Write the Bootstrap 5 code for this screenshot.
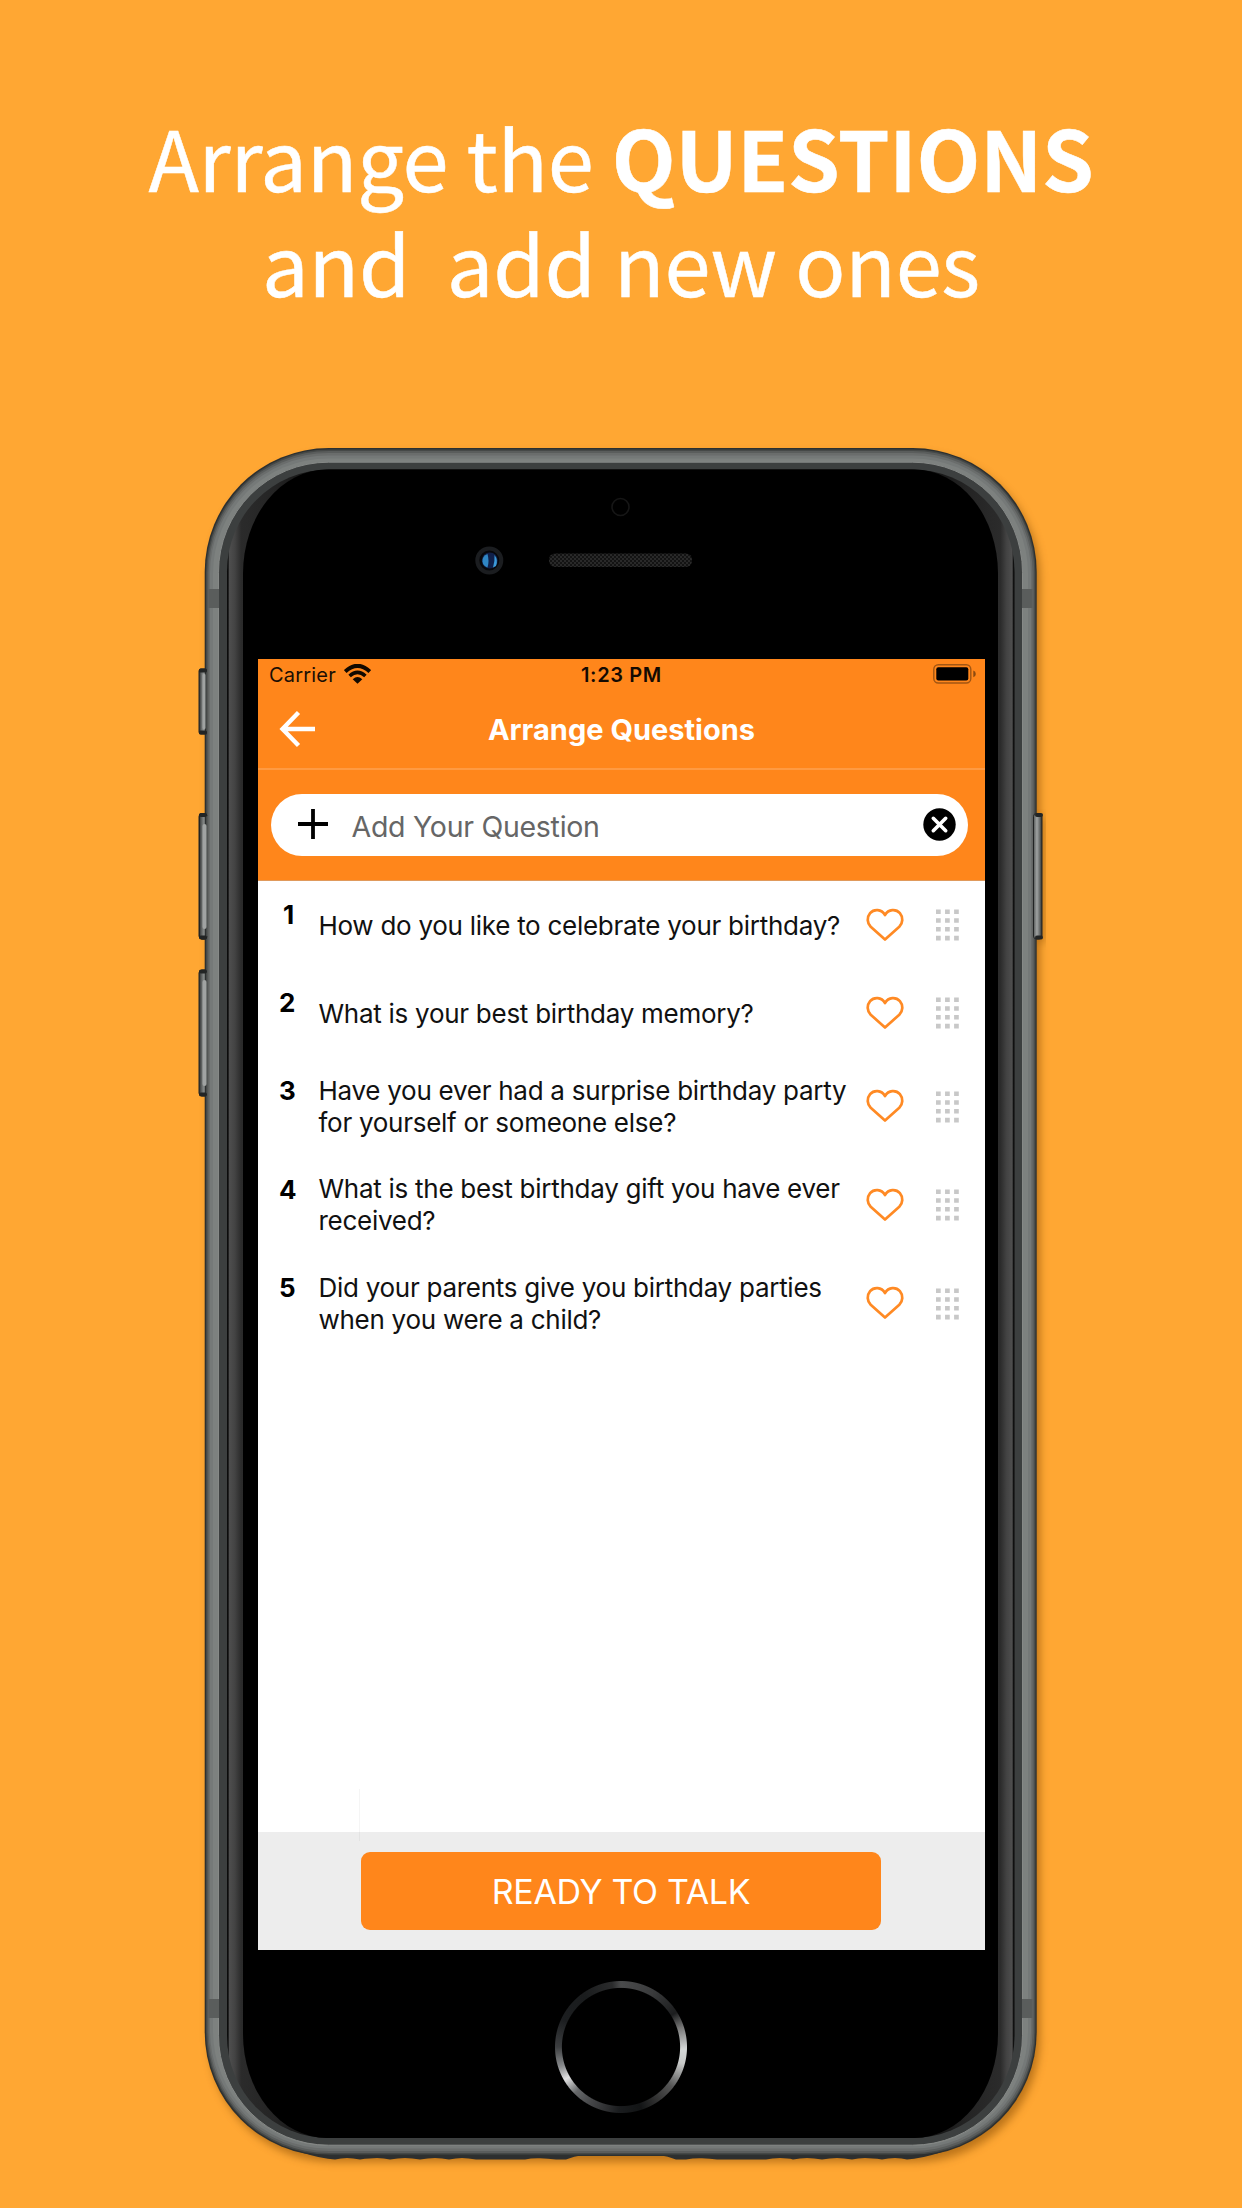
<!DOCTYPE html>
<html lang="en">
<head>
<meta charset="utf-8">
<meta name="viewport" content="width=device-width, initial-scale=1">
<title>Arrange Questions</title>
<link rel="stylesheet" href="https://cdn.jsdelivr.net/npm/bootstrap@5.3.0/dist/css/bootstrap.min.css">
<style>
  html, body { background: #ffa733; }
  body { width: 1242px; height: 2208px; overflow: hidden; font-family: Inter, "Liberation Sans", sans-serif; }
  .promo { height: 448px; padding-top: 104px; font-family: "Noto Sans CJK SC", "Noto Sans", sans-serif; font-size: 83px; letter-spacing: -.25px; line-height: 105px; white-space: pre; font-weight: 400; -webkit-text-stroke: .5px #fff; }
  .promo b { font-weight: 700; }
  .phone { width: 832px; height: 1712px; margin-left: 205px; padding: 210.5px 52px 0 53px; }
  .shell { left: -205px; top: -448px; width: 1242px; height: 2208px; pointer-events: none; }
  .home-ring { left: 348.5px; top: 1531.5px; width: 134px; height: 134px;
    background: conic-gradient(#4a4b4c 0deg, #3a3b3c 30deg, #1c1d1e 58deg, #777 72deg, #d5d8d7 92deg, #c8cac9 105deg, #555 128deg, #333 145deg, #121415 162deg, #1a1c1e 182deg, #2c2d2f 192deg, #48494b 210deg, #66686a 225deg, #e2e2e3 240deg, #8a8c8e 252deg, #3c3e40 270deg, #1c1e20 295deg, #1a1c1d 325deg, #2a2b2c 352deg, #4a4b4c 360deg);
    -webkit-mask: radial-gradient(circle, transparent 58.6px, #000 59.6px, #000 65.5px, transparent 66.5px);
    mask: radial-gradient(circle, transparent 58.6px, #000 59.6px, #000 65.5px, transparent 66.5px); }
  .app { width: 727px; height: 1291px; background: #fff; color: #111; }
  .app-head { background: #ff861b; height: 222px; border-bottom: 1px solid #e09a5c; }
  .status { height: 31px; padding: 0 9px 0 11px; font-size: 20px; line-height: 31px; color: #1a0e04; }
  .status .carrier { letter-spacing: .2px; padding-top: 2px; }
  .status-time { font-weight: 600; color: #140a02; letter-spacing: .65px; padding-top: 2px; }
  .title-bar { height: 80px; border-bottom: 2px solid #ff9a42; }
  .title-bar .back { margin-left: 20px; width: 40px; margin-top: 1px; }
  .title-text { font-size: 29px; font-weight: 700; line-height: 80px; padding-top: 2px; }
  .ask { margin: 24px 17.5px 0 12.5px; height: 62px; border-radius: 31px; padding: 0 12px 0 26.5px; }
  .ask svg { margin-bottom: 1px; }
  .ask-text { font-size: 28.5px; letter-spacing: -.28px; color: #666; line-height: 62px; margin-left: 22.5px; padding-top: 5px; }
  .q-row { padding: 0 26px 0 21px; border: 0; }
  .q-short { height: 88px; }
  .q-long { height: 98.6px; }
  .q-num { width: 39.5px; font-size: 26px; font-weight: 700; line-height: 32px; padding-top: 18.5px; color: #000; }
  .q-text { font-size: 26px; letter-spacing: -.27px; line-height: 32px; width: 548px; white-space: nowrap; padding-top: 2px; }
  .q-heart { width: 38px; height: 34px; margin-right: 32px; margin-top: 1px; }
  .q-grip { width: 23px; height: 32px; margin-top: 1.5px; }
  .foot { height: 118px; background: #ededed; padding-top: 20.5px; padding-right: 1px; }
  .foot .btn-ready { width: 520px; height: 78px; border-radius: 9px; background: #ff861b; color: #fff; font-size: 34px; letter-spacing: -.35px; line-height: 76px; padding: 2px 0 0; border: 0; }
  .hairline { left: 101px; top: 1130px; width: 1px; height: 52px; background: rgba(0,0,0,.04); }
</style>
</head>
<body>
<h1 class="promo text-white text-center m-0">Arrange the <b>QUESTIONS</b>
and  add new ones</h1>

<main class="phone position-relative">
  <svg class="shell position-absolute" viewBox="0 0 1242 2208" aria-hidden="true">
    <defs>
      <linearGradient id="glassL" gradientUnits="userSpaceOnUse" x1="227" y1="0" x2="1014.5" y2="0">
        <stop offset="0" stop-color="#080808"/><stop offset=".0015" stop-color="#111"/><stop offset=".003" stop-color="#4e4e4e"/>
        <stop offset=".01" stop-color="#434343"/><stop offset=".018" stop-color="#2b2b2b"/><stop offset=".06" stop-color="#242424"/>
        <stop offset=".13" stop-color="#0c0c0c"/><stop offset=".87" stop-color="#0c0c0c"/>
        <stop offset=".94" stop-color="#242424"/><stop offset=".982" stop-color="#2b2b2b"/><stop offset=".99" stop-color="#434343"/>
        <stop offset=".997" stop-color="#4e4e4e"/><stop offset=".9985" stop-color="#111"/><stop offset="1" stop-color="#080808"/>
      </linearGradient>
      <linearGradient id="key" x1="0" x2="1" y1="0" y2="0"><stop offset="0" stop-color="#2b2d2d"/><stop offset=".3" stop-color="#6d706f"/><stop offset=".6" stop-color="#a0a3a2"/><stop offset="1" stop-color="#555857"/></linearGradient>
      <linearGradient id="keyR" x1="1" x2="0" y1="0" y2="0"><stop offset="0" stop-color="#2b2d2d"/><stop offset=".3" stop-color="#6d706f"/><stop offset=".6" stop-color="#a0a3a2"/><stop offset="1" stop-color="#555857"/></linearGradient>
      <pattern id="mesh" width="4" height="4" patternUnits="userSpaceOnUse"><rect width="4" height="4" fill="#131313"/><rect width="2" height="2" fill="#292929"/><rect x="2" y="2" width="2" height="2" fill="#292929"/></pattern>
      <filter id="soft" x="-5%" y="-5%" width="110%" height="110%"><feGaussianBlur stdDeviation="4"/></filter>
    </defs>
    <rect x="209" y="454" width="831" height="1708" rx="124" fill="#7a4300" opacity=".5" filter="url(#soft)"/>
    <rect x="1037" y="816" width="8" height="127" rx="3" fill="#7a4300" opacity=".4" filter="url(#soft)"/>
    <!-- side keys; the right one overlaps the frame edge -->
    <g stroke="#222424" stroke-width="1">
      <rect x="199" y="669" width="9" height="65" rx="2" fill="url(#key)"/>
      <rect x="199" y="813.5" width="11" height="125.5" rx="3" fill="url(#key)"/>
      <rect x="199" y="970" width="11" height="126" rx="3" fill="url(#key)"/>
    </g>
    <!-- metal frame, dark edge to bright ridge -->
    <path fill="#2d2f2f" d="M300 2152Q322 2159 335 2159.500Q341 2158 347 2158T360 2159.500Q370 2158 377 2158T390 2159.500Q398 2158 405 2158T420 2159.500Q428 2158 435 2158T449 2159.500Q456 2158 462 2158T476 2159.500H525Q532 2158 540 2158.300T556 2159.500H566Q574 2156 583 2155H659Q668 2156 676 2159.500H686Q694 2158 702 2158.300T717 2159.500H766Q772 2158 780 2158T793 2159.500Q800 2158 807 2158T822 2159.500Q830 2158 837 2158T852 2159.500Q858 2158 865 2158T882 2159.500Q888 2158 895 2158T907 2159.500Q920 2159 942 2152Z"/>
    <rect x="204.700" y="448" width="832" height="1708" rx="124" fill="#2d3030"/>
    <rect x="206" y="449.500" width="829.500" height="1705" rx="123" fill="#454847"/>
    <rect x="207.300" y="451" width="827" height="1702" rx="121.500" fill="#5a5d5c"/>
    <rect x="208.600" y="453" width="824" height="1698" rx="120" fill="#6a6d6c"/>
    <rect x="210" y="455.500" width="821" height="1693" rx="118" fill="#757978"/>
    <rect x="213" y="458.500" width="815" height="1687.500" rx="115" fill="#7d817f"/>
    <rect x="218.500" y="462.200" width="804" height="1683" rx="110" fill="#3c3f3f" stroke="#868987" stroke-width="1"/>
    <g fill="#5a5d5c">
      <rect x="208.500" y="589" width="10.500" height="19"/><rect x="1022" y="589" width="10.500" height="19"/>
      <rect x="208.500" y="1999" width="10.500" height="19"/><rect x="1022" y="1999" width="10.500" height="19"/>
    </g>
    <g stroke="#222424" stroke-width="1">
      <path d="M207 816Q207 813.500 204 813.500H202Q199.500 813.500 199.500 816V936.500Q199.500 939 202 939H204Q207 939 207 936.500" fill="none"/>
      <rect x="1033.500" y="813.500" width="8.500" height="125.500" rx="3" fill="url(#keyR)"/>
    </g>
    <g fill="#a0a3a2">
      <rect x="202.500" y="824" width="4" height="105" rx="2"/><rect x="202.500" y="980" width="4" height="106" rx="2"/><rect x="202.500" y="674" width="3" height="55" rx="1"/>
    </g>
    <g fill="#222424">
      <rect x="199" y="668.500" width="8" height="4" rx="1.500"/><rect x="199" y="730.500" width="8" height="4" rx="1.500"/>
      <rect x="199" y="813" width="8" height="4" rx="2"/><rect x="199" y="935.500" width="8" height="4" rx="2"/>
      <rect x="199" y="969.500" width="8" height="4" rx="2"/><rect x="199" y="1092.500" width="8" height="4" rx="2"/>
      <rect x="1035" y="813" width="8" height="4" rx="2"/><rect x="1035" y="935.500" width="8" height="4" rx="2"/>
    </g>
    <rect x="227" y="469.500" width="787.500" height="1668.500" rx="102" fill="url(#glassL)"/>
    <rect x="243" y="469.500" width="755" height="1668.500" rx="84" ry="104" fill="#000"/>
    <!-- sensor, camera, earpiece -->
    <circle cx="620.500" cy="507" r="8.500" fill="#000" stroke="#161616" stroke-width="1.600"/>
    <circle cx="489.300" cy="560.500" r="12" fill="#08080a" stroke="#1b1d20" stroke-width="4"/>
    <circle cx="489.800" cy="560.500" r="8" fill="#10204a"/>
    <path d="M487.500 554Q482 556 482.500 561.500Q483 566 487.500 567.500Q489.500 561 487.500 554Z" fill="#2f86c4"/>
    <path d="M494.500 555Q498.500 560 496 566L493 567.500Q495 561 494.500 555Z" fill="#3b9ad8"/>
    <rect x="549" y="553.500" width="143" height="13.500" rx="6" fill="url(#mesh)"/>
  </svg>
  <div class="home-ring position-absolute rounded-circle"></div>

  <div class="app position-relative d-flex flex-column">
    <header class="app-head text-white flex-shrink-0">
      <div class="status d-flex justify-content-between align-items-center position-relative">
        <div class="d-flex align-items-center gap-2">
          <span class="carrier">Carrier</span>
          <svg width="27" height="20" viewBox="0 0 27 20" fill="none" stroke="#120900"><path d="M1.200 7.500Q13.500-3.800 25.800 7.500" stroke-width="4"/><path d="M5.600 12Q13.500 4.800 21.400 12" stroke-width="3.600"/><path d="M13.500 19.800L8.700 15.200Q13.500 11 18.300 15.200Z" fill="#120900" stroke="none"/></svg>
        </div>
        <span class="status-time position-absolute start-50 translate-middle-x text-nowrap">1:23 PM</span>
        <svg width="43" height="20" viewBox="0 0 43 20"><rect x=".8" y=".8" width="37" height="18.200" rx="4.500" fill="none" stroke="#a25613" stroke-width="1.400"/><rect x="3.300" y="3.300" width="32" height="13.200" rx="2" fill="#000"/><path d="M40.300 6.500Q42.800 7.500 42.800 9.900T40.300 13.300Z" fill="#8c4a10"/></svg>
      </div>
      <div class="title-bar d-flex align-items-center position-relative">
        <svg class="back" height="40" viewBox="0 0 40 40" fill="none" stroke="#fff" stroke-width="4.400"><path d="M37 20H5M20.500 3.500L4.500 20L20.500 36.500"/></svg>
        <span class="title-text position-absolute start-50 translate-middle-x text-nowrap">Arrange Questions</span>
      </div>
      <div class="ask bg-white d-flex align-items-center">
        <svg width="32" height="32" viewBox="0 0 32 32" stroke="#000" stroke-width="3.800"><path d="M16 1V31M1 16H31"/></svg>
        <span class="ask-text me-auto">Add Your Question</span>
        <svg width="33" height="33" viewBox="0 0 33 33"><circle cx="16.500" cy="16.500" r="16.200" fill="#000"/><path d="M10.300 10.300L22.700 22.700M22.700 10.300L10.300 22.700" stroke="#fff" stroke-width="3.600" stroke-linecap="round"/></svg>
      </div>
    </header>

    <svg class="d-none">
      <symbol id="heart" viewBox="0 0 38 34"><path d="M19 7C15.500 1 8 .8 4.100 5.200C.7 9.300 1 15 4.700 18.700L19 31.500L33.300 18.700C37 15 37.300 9.300 33.900 5.200C30 .8 22.500 1 19 7Z" fill="none" stroke="#ff8a24" stroke-width="2.700" stroke-linejoin="round"/></symbol>
      <symbol id="grip" viewBox="0 0 23 32"><path d="M0 2.700H23M0 11.500H23M0 20.300H23M0 29.100H23" stroke="#c8c8c8" stroke-width="4.600" stroke-dasharray="4.700 4.350"/></symbol>
    </svg>
    <div class="list-group list-group-flush flex-grow-1">
      <div class="q-row q-short d-flex align-items-center">
        <div class="q-num align-self-start ps-1">1</div>
        <div class="q-text flex-grow-1">How do you like to celebrate your birthday?</div>
        <svg class="q-heart flex-shrink-0"><use href="#heart"/></svg><svg class="q-grip flex-shrink-0"><use href="#grip"/></svg>
      </div>
      <div class="q-row q-short d-flex align-items-center">
        <div class="q-num align-self-start">2</div>
        <div class="q-text flex-grow-1">What is your best birthday memory?</div>
        <svg class="q-heart flex-shrink-0"><use href="#heart"/></svg><svg class="q-grip flex-shrink-0"><use href="#grip"/></svg>
      </div>
      <div class="q-row q-long d-flex align-items-center">
        <div class="q-num align-self-start">3</div>
        <div class="q-text flex-grow-1">Have you ever had a surprise birthday party<br>for yourself or someone else?</div>
        <svg class="q-heart flex-shrink-0"><use href="#heart"/></svg><svg class="q-grip flex-shrink-0"><use href="#grip"/></svg>
      </div>
      <div class="q-row q-long d-flex align-items-center">
        <div class="q-num align-self-start">4</div>
        <div class="q-text flex-grow-1">What is the best birthday gift you have ever<br>received?</div>
        <svg class="q-heart flex-shrink-0"><use href="#heart"/></svg><svg class="q-grip flex-shrink-0"><use href="#grip"/></svg>
      </div>
      <div class="q-row q-long d-flex align-items-center">
        <div class="q-num align-self-start">5</div>
        <div class="q-text flex-grow-1">Did your parents give you birthday parties<br>when you were a child?</div>
        <svg class="q-heart flex-shrink-0"><use href="#heart"/></svg><svg class="q-grip flex-shrink-0"><use href="#grip"/></svg>
      </div>
    </div>
    <footer class="foot text-center flex-shrink-0"><button class="btn btn-ready" type="button">READY TO TALK</button></footer>
    <div class="hairline position-absolute"></div>
  </div>
</main>
<script src="https://cdn.jsdelivr.net/npm/bootstrap@5.3.0/dist/js/bootstrap.bundle.min.js"></script>
</body>
</html>
